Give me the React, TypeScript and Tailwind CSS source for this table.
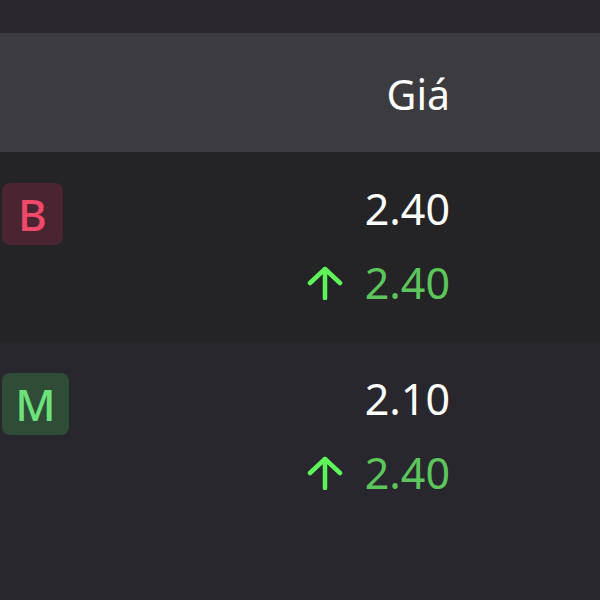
import React from 'react';

type Row = { tag: 'B' | 'M'; price: string; last: string };

const rows: Row[] = [
  { tag: 'B', price: '2.40', last: '2.40' },
  { tag: 'M', price: '2.10', last: '2.40' },
];

function UpArrow() {
  return (
    <svg width="36" height="34" viewBox="0 0 36 34" fill="none" stroke="#5ef45a" strokeWidth={4.5} strokeLinecap="round" strokeLinejoin="round">
      <path d="M3 17 18 3l15 14" />
      <path d="M18 3v29" />
    </svg>
  );
}

function Badge({ tag }: { tag: Row['tag'] }) {
  const cls =
    tag === 'B'
      ? 'w-[61px] bg-[#4a2430] text-[#f2486a]'
      : 'w-[67px] bg-[#2f4c37] text-[#6ee27a]';
  return (
    <div className={`h-[62px] rounded-lg flex items-center justify-center text-[44px] font-medium leading-none ${cls}`}>
      {tag}
    </div>
  );
}

export default function App() {
  return (
    <div className="h-[600px] w-[600px] flex flex-col bg-[#29272e] font-['Noto_Sans',sans-serif] overflow-hidden">
      {/* top strip */}
      <div className="h-[33px] bg-[#29272d]" />

      {/* header */}
      <div className="h-[119px] bg-[#3c3b3f] flex items-center justify-end pr-[150px]">
        <span className="text-[41px] leading-none text-white pt-[4px]">Giá</span>
      </div>

      {rows.map((row, i) => (
        <div
          key={i}
          className={`${i === 0 ? 'h-[190px] bg-[#242426]' : 'flex-1 bg-[#29272e]'} flex items-start justify-between pl-[2px] pr-[150px]`}
        >
          <div className="mt-[31px]">
            <Badge tag={row.tag} />
          </div>
          <div className="mt-[35px] flex flex-col items-end">
            <span className="text-[43px] leading-none text-white">{row.price}</span>
            <div className="mt-[31px] flex items-center gap-[22px]">
              <UpArrow />
              <span className="text-[43px] leading-none text-[#5cc65c]">{row.last}</span>
            </div>
          </div>
        </div>
      ))}
    </div>
  );
}
